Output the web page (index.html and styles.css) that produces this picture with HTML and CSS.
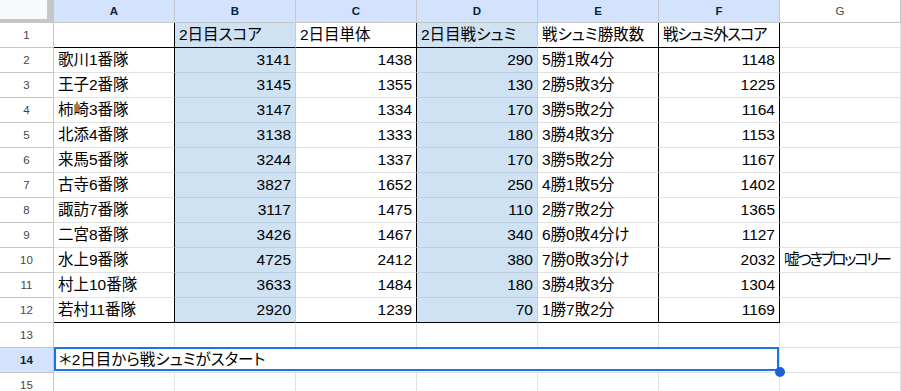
FILE: index.html
```html
<!DOCTYPE html>
<html lang="ja">
<head>
<meta charset="utf-8">
<link rel="stylesheet" href="styles.css">
</head>
<body>
<div class="sheet">
  <div class="corner"></div>
  <div class="ch sel">A</div><div class="ch sel">B</div><div class="ch sel">C</div><div class="ch sel">D</div><div class="ch sel">E</div><div class="ch sel">F</div><div class="ch">G</div>

  <div class="rh">1</div>
  <div class="c brk bbk"></div><div class="c blue bbk">2日目スコア</div><div class="c brk bbk">2日目単体</div><div class="c blue bbk">2日目戦シュミ</div><div class="c brk bbk">戦シュミ勝敗数</div><div class="c brk bbk tight">戦シュミ外スコア</div><div class="c"></div>

  <div class="rh">2</div>
  <div class="c brk">歌川1番隊</div><div class="c blue num">3141</div><div class="c brk num">1438</div><div class="c blue num">290</div><div class="c brk">5勝1敗4分</div><div class="c brk num">1148</div><div class="c"></div>

  <div class="rh">3</div>
  <div class="c brk">王子2番隊</div><div class="c blue num">3145</div><div class="c brk num">1355</div><div class="c blue num">130</div><div class="c brk">2勝5敗3分</div><div class="c brk num">1225</div><div class="c"></div>

  <div class="rh">4</div>
  <div class="c brk">柿崎3番隊</div><div class="c blue num">3147</div><div class="c brk num">1334</div><div class="c blue num">170</div><div class="c brk">3勝5敗2分</div><div class="c brk num">1164</div><div class="c"></div>

  <div class="rh">5</div>
  <div class="c brk">北添4番隊</div><div class="c blue num">3138</div><div class="c brk num">1333</div><div class="c blue num">180</div><div class="c brk">3勝4敗3分</div><div class="c brk num">1153</div><div class="c"></div>

  <div class="rh">6</div>
  <div class="c brk">来馬5番隊</div><div class="c blue num">3244</div><div class="c brk num">1337</div><div class="c blue num">170</div><div class="c brk">3勝5敗2分</div><div class="c brk num">1167</div><div class="c"></div>

  <div class="rh">7</div>
  <div class="c brk">古寺6番隊</div><div class="c blue num">3827</div><div class="c brk num">1652</div><div class="c blue num">250</div><div class="c brk">4勝1敗5分</div><div class="c brk num">1402</div><div class="c"></div>

  <div class="rh">8</div>
  <div class="c brk">諏訪7番隊</div><div class="c blue num">3117</div><div class="c brk num">1475</div><div class="c blue num">110</div><div class="c brk">2勝7敗2分</div><div class="c brk num">1365</div><div class="c"></div>

  <div class="rh">9</div>
  <div class="c brk">二宮8番隊</div><div class="c blue num">3426</div><div class="c brk num">1467</div><div class="c blue num">340</div><div class="c brk">6勝0敗4分け</div><div class="c brk num">1127</div><div class="c"></div>

  <div class="rh">10</div>
  <div class="c brk">水上9番隊</div><div class="c blue num">4725</div><div class="c brk num">2412</div><div class="c blue num">380</div><div class="c brk">7勝0敗3分け</div><div class="c brk num">2032</div><div class="c tighter">嘘つきブロッコリー</div>

  <div class="rh">11</div>
  <div class="c brk">村上10番隊</div><div class="c blue num">3633</div><div class="c brk num">1484</div><div class="c blue num">180</div><div class="c brk">3勝4敗3分</div><div class="c brk num">1304</div><div class="c"></div>

  <div class="rh">12</div>
  <div class="c brk bbk">若村11番隊</div><div class="c blue num bbk">2920</div><div class="c brk num bbk">1239</div><div class="c blue num bbk">70</div><div class="c brk bbk">1勝7敗2分</div><div class="c brk num bbk">1169</div><div class="c"></div>

  <div class="rh">13</div>
  <div class="c"></div><div class="c"></div><div class="c"></div><div class="c"></div><div class="c"></div><div class="c"></div><div class="c"></div>

  <div class="rh rsel">14</div>
  <div class="c merged">＊2日目から戦シュミがスタート<span class="handle"></span></div><div class="c"></div>

  <div class="rh">15</div>
  <div class="c"></div><div class="c"></div><div class="c"></div><div class="c"></div><div class="c"></div><div class="c"></div><div class="c"></div>
</div>
</body>
</html>
```
FILE: styles.css
```css
html, body {
  margin: 0;
  padding: 0;
  background: #ffffff;
  overflow: hidden;
}

.sheet {
  display: grid;
  grid-template-columns: 54px repeat(7, 121px);
  grid-template-rows: 23px repeat(15, 25px);
  width: 901px;
  font-family: "Liberation Sans", "Noto Sans CJK JP", sans-serif;
}

.corner {
  box-sizing: border-box;
  background: #f8f9fa;
  box-shadow: inset -7px -4px 0 #c4c7c5;
}

.ch {
  box-sizing: border-box;
  display: flex;
  align-items: center;
  justify-content: center;
  background: #ffffff;
  border-right: 1px solid #c4c7c5;
  border-bottom: 1px solid #c4c7c5;
  font-size: 11.5px;
  color: #444746;
}

.ch.sel {
  background: #d3e3fd;
  color: #0b1f3f;
  font-weight: bold;
}

.rh {
  box-sizing: border-box;
  display: flex;
  align-items: center;
  justify-content: center;
  background: #ffffff;
  border-right: 1px solid #c4c7c5;
  border-bottom: 1px solid #c4c7c5;
  font-size: 11.5px;
  color: #444746;
}

.rh.rsel {
  background: #d3e3fd;
  color: #0b1f3f;
  font-weight: bold;
}

.c {
  box-sizing: border-box;
  display: flex;
  align-items: center;
  padding: 0 4px 0 4px;
  border-right: 1px solid #e1e1e1;
  border-bottom: 1px solid #e1e1e1;
  font-size: 15.5px;
  line-height: 20px;
  color: #000000;
  white-space: nowrap;
  overflow: visible;
  font-feature-settings: "palt" 1;
}

.c.num {
  justify-content: flex-end;
}

.c.tight {
  letter-spacing: -1.4px;
}

.c.tighter {
  letter-spacing: -2.4px;
}

.c.blue {
  background: #cfe2f3;
  border-right-color: #bccfe0;
  border-bottom-color: #bccfe0;
}

.c.brk {
  border-right-color: #000000;
}

.c.bbk {
  border-bottom-color: #000000;
}

.merged {
  grid-column: span 6;
  position: relative;
  padding-left: 5px;
}

.merged::after {
  content: "";
  position: absolute;
  top: -1px;
  left: 0;
  right: 0;
  bottom: 1px;
  border: 2px solid #1a73e8;
  pointer-events: none;
}

.handle {
  position: absolute;
  right: -6px;
  bottom: -5px;
  width: 10px;
  height: 10px;
  border-radius: 50%;
  background: #1a62d6;
  z-index: 2;
}
```
